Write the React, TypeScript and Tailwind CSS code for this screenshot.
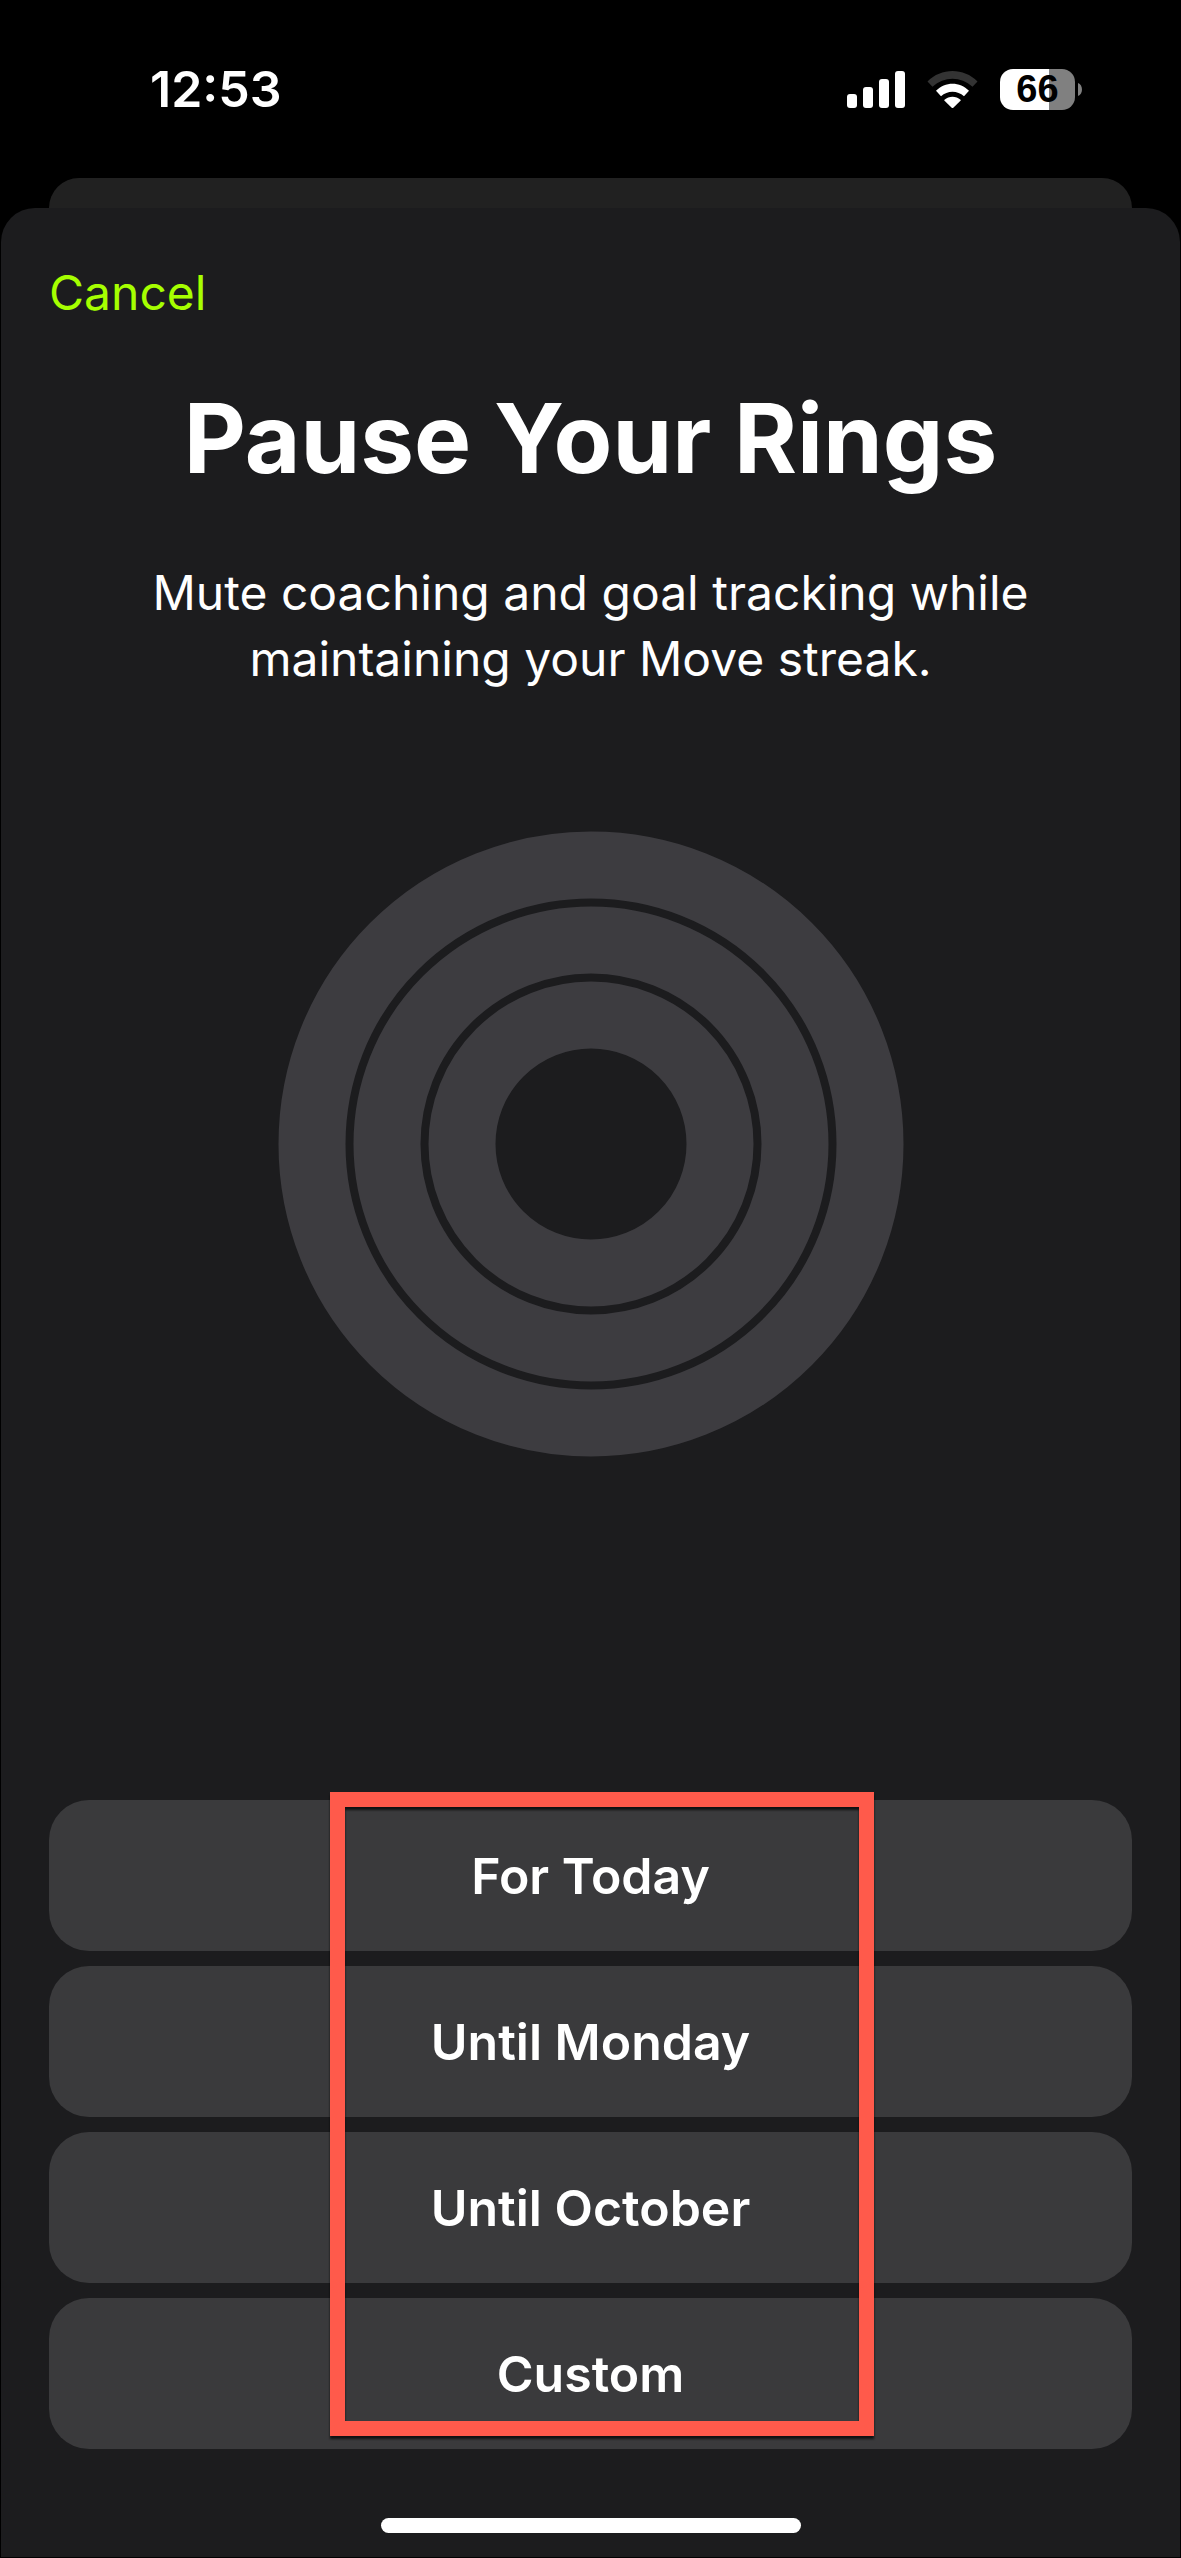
const PAUSE_OPTIONS = ["For Today", "Until Monday", "Until October", "Custom"];

// mid-line radius of each ring, outermost first
const RINGS = [279, 204, 129];

export default function App() {
  return (
    <div className="flex min-h-screen flex-col bg-black font-['Inter',sans-serif] text-white">
      <StatusBar />

      {/* edge of the screen underneath */}
      <div className="mx-[49px] h-[30px] rounded-t-[30px] bg-[#212121]" />

      <main className="mx-px mb-px flex flex-1 flex-col rounded-t-[34px] bg-[#1c1c1e] px-12">
        <div className="pt-[52px]">
          <button type="button" className="text-[48px] leading-[66px] text-[#a6ff00]">
            Cancel
          </button>
        </div>

        <h1 className="mt-[52px] text-center text-[96px] leading-[120px] font-bold">Pause Your Rings</h1>
        <p className="mx-auto mt-[62px] max-w-[940px] text-center text-[48px] leading-[66px]">
          Mute coaching and goal tracking while maintaining your Move streak.
        </p>

        <ActivityRings />

        <div className="relative mt-auto flex flex-col gap-[15px] pt-16">
          {PAUSE_OPTIONS.map((option) => (
            <button
              key={option}
              type="button"
              className="h-[151px] w-full rounded-[40px] bg-[#3a3a3c] text-[50px] leading-[66px] font-semibold"
            >
              {option}
            </button>
          ))}
          <div className="pointer-events-none absolute top-14 right-[258px] bottom-[13px] left-[281px] border-[15px] border-[#ff5a4b] drop-shadow-[0_3px_1px_rgba(0,0,0,0.7)]" />
        </div>

        <div className="mx-auto mt-[69px] mb-6 h-[15px] w-[420px] rounded-full bg-white" />
      </main>
    </div>
  );
}

function StatusBar() {
  return (
    <header className="flex h-[178px] items-center justify-between pr-[99px] pl-[150px]">
      <time className="text-[50px] leading-[66px] font-semibold">12:53</time>
      <div className="flex items-center">
        <SignalIcon />
        <WifiIcon />
        <Battery level={66} />
      </div>
    </header>
  );
}

function SignalIcon() {
  return (
    <svg className="h-[37px] w-[58px]" viewBox="0 0 58 37" fill="#fff" aria-label="Signal">
      <rect x="0" y="23" width="10" height="14" rx="3" />
      <rect x="16" y="16" width="10" height="21" rx="3" />
      <rect x="32" y="8" width="10" height="29" rx="3" />
      <rect x="48" y="0" width="10" height="37" rx="3" />
    </svg>
  );
}

function WifiIcon() {
  return (
    <svg className="ml-[22px] h-[37px] w-[51px]" viewBox="0 0 51 37" aria-label="Wi-Fi">
      <path d="M0.5 10.5C14 -3.5 37 -3.5 50.5 10.5L45.5 15.8C34 5 17 5 5.5 15.8Z" fill="#333" />
      <path d="M9 19.8C18 10.4 33 10.4 42 19.8L37 25.3C30.5 19.2 20.5 19.2 14 25.3Z" fill="#fff" />
      <path d="M17.5 28.8C22 24.6 29 24.6 33.5 28.8Q34 29.3 33.5 29.8L26.3 36.7Q25.5 37.3 24.7 36.7L17.5 29.8Q17 29.3 17.5 28.8Z" fill="#fff" />
    </svg>
  );
}

function Battery({ level }: { level: number }) {
  return (
    <div className="ml-[22px] flex items-center gap-[3px]">
      <div
        className="flex h-[41px] w-[75px] items-center justify-center rounded-[13px] font-['Liberation_Sans',sans-serif] text-[38px] leading-[41px] font-bold text-black"
        style={{ background: `linear-gradient(to right, #fff ${level}%, #808080 ${level}%)` }}
      >
        {level}
      </div>
      <svg className="h-[13px] w-1" viewBox="0 0 4 13" fill="#808080">
        <path d="M0 0C5.3 2 5.3 11 0 13Z" />
      </svg>
    </div>
  );
}

function ActivityRings() {
  return (
    <svg className="mx-auto mt-[139px] w-[626px] max-w-full" viewBox="0 0 626 626" aria-label="Activity rings">
      {RINGS.map((r) => (
        <circle key={r} cx="313" cy="313" r={r} fill="none" stroke="#3d3c40" strokeWidth="67" />
      ))}
    </svg>
  );
}
